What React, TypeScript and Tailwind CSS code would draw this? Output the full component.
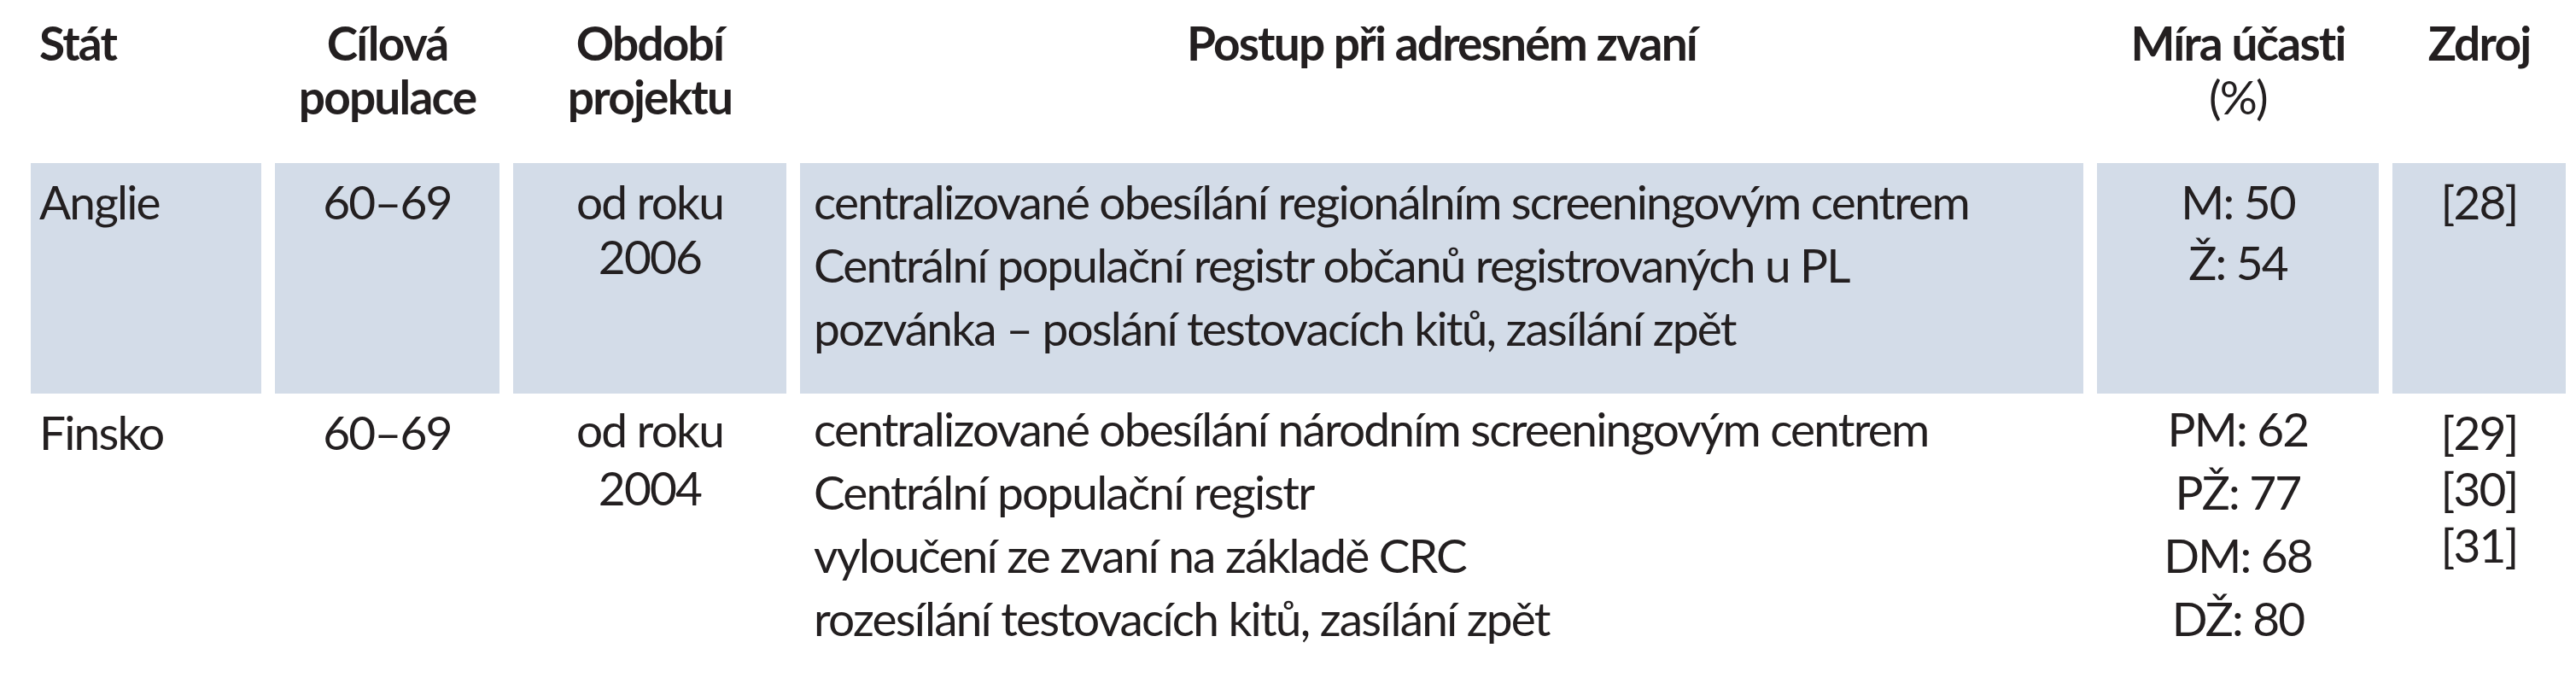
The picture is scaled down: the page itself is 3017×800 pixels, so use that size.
const rowBg = 'bg-[#d3dce8]';

type Lines = string[];

const Stack = ({ lines }: { lines: Lines }) => (
  <>
    {lines.map((line) => (
      <div key={line} className="whitespace-nowrap">
        {line}
      </div>
    ))}
  </>
);

export default function App() {
  return (
    <div className="min-h-[800px] bg-white pl-[36px] pt-[19px] font-['Lato','Open_Sans',sans-serif] text-[55px] tracking-[-0.033em] text-[#231f20]">
      <div className="grid grid-cols-[270px_263px_320px_1503px_330px_203px] gap-x-[16px]">
        {/* header */}
        <div className="pb-[46px] pl-[10px] font-bold leading-[63px]">Stát</div>
        <div className="pb-[46px] text-center font-bold leading-[63px]">
          <Stack lines={['Cílová', 'populace']} />
        </div>
        <div className="pb-[46px] text-center font-bold leading-[63px]">
          <Stack lines={['Období', 'projektu']} />
        </div>
        <div className="pb-[46px] text-center font-bold leading-[63px]">Postup při adresném zvaní</div>
        <div className="pb-[46px] text-center leading-[63px]">
          <div className="font-bold">Míra účasti</div>
          <div>(%)</div>
        </div>
        <div className="pb-[46px] text-center font-bold leading-[63px]">Zdroj</div>

        {/* Anglie */}
        <div className={`${rowBg} pl-[10px] pt-[8px] leading-[74px]`}>Anglie</div>
        <div className={`${rowBg} pt-[8px] text-center leading-[74px]`}>60–69</div>
        <div className={`${rowBg} pt-[13px] text-center leading-[64px]`}>
          <Stack lines={['od roku', '2006']} />
        </div>
        <div className={`${rowBg} pb-[40px] pl-[16px] pt-[8px] leading-[74px]`}>
          <Stack
            lines={[
              'centralizované obesílání regionálním screeningovým centrem',
              'Centrální populační registr občanů registrovaných u PL',
              'pozvánka – poslání testovacích kitů, zasílání zpět',
            ]}
          />
        </div>
        <div className={`${rowBg} pt-[10px] text-center leading-[71px]`}>
          <Stack lines={['M: 50', 'Ž: 54']} />
        </div>
        <div className={`${rowBg} pt-[8px] text-center leading-[74px]`}>[28]</div>

        {/* Finsko */}
        <div className="pl-[10px] pt-[8px] leading-[74px]">Finsko</div>
        <div className="pt-[8px] text-center leading-[74px]">60–69</div>
        <div className="pt-[8px] text-center leading-[68px]">
          <Stack lines={['od roku', '2004']} />
        </div>
        <div className="pl-[16px] pt-[4px] leading-[74px]">
          <Stack
            lines={[
              'centralizované obesílání národním screeningovým centrem',
              'Centrální populační registr',
              'vyloučení ze zvaní na základě CRC',
              'rozesílání testovacích kitů, zasílání zpět',
            ]}
          />
        </div>
        <div className="pt-[4px] text-center leading-[74px]">
          <Stack lines={['PM: 62', 'PŽ: 77', 'DM: 68', 'DŽ: 80']} />
        </div>
        <div className="pt-[12px] text-center leading-[66px]">
          <Stack lines={['[29]', '[30]', '[31]']} />
        </div>
      </div>
    </div>
  );
}
